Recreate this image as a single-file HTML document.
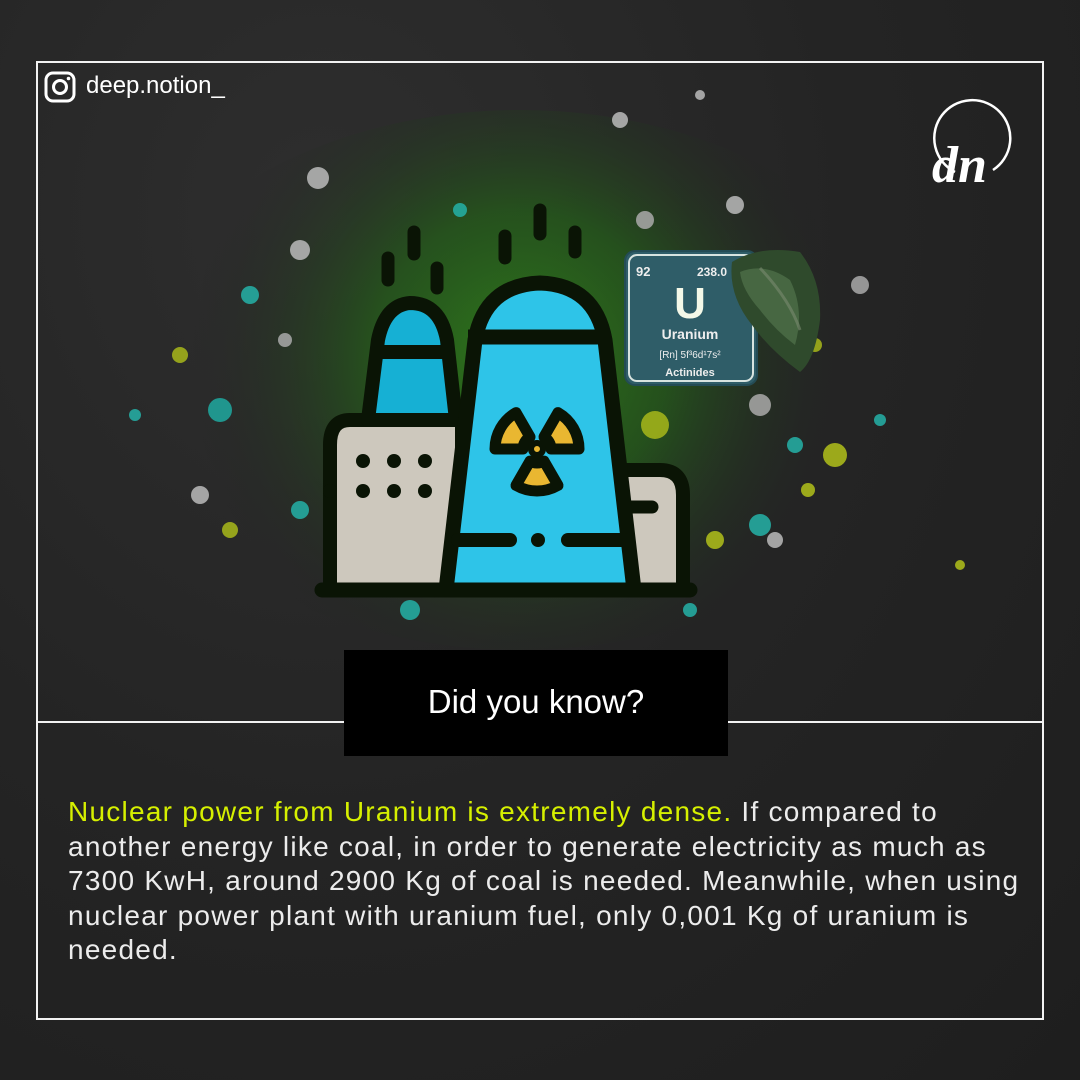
<!DOCTYPE html>
<html><head><meta charset="utf-8"><style>
html,body{margin:0;padding:0}
body{width:1080px;height:1080px;position:relative;overflow:hidden;font-family:"Liberation Sans",sans-serif;
background:radial-gradient(ellipse at 30% 20%,#2e2e2e 0%,#242424 50%,#1e1e1e 100%);}
.frame{position:absolute;left:36px;top:61px;width:1004px;height:955px;border:2px solid #f2f2f2;}
.hline{position:absolute;left:36px;top:721px;width:1008px;height:2px;background:#f2f2f2}
.dyk{position:absolute;left:344px;top:650px;width:384px;height:106px;background:#000;color:#fff;font-size:33px;text-align:center;line-height:104px}
.ig{position:absolute;left:86px;top:72px;color:#fff;font-size:24px}
.body{position:absolute;left:68px;top:795px;width:1000px;color:#ececec;font-size:28px;line-height:34.5px;letter-spacing:1.25px;white-space:nowrap}
.body span{color:#d6f000}
</style></head><body>
<svg width="1080" height="1080" style="position:absolute;left:0;top:0">
<defs>
<radialGradient id="g" cx="520" cy="360" r="330" gradientUnits="userSpaceOnUse">
<stop offset="0" stop-color="#2f7a1c" stop-opacity="1"/>
<stop offset="0.45" stop-color="#245a1a" stop-opacity=".8"/>
<stop offset="1" stop-color="#222" stop-opacity="0"/>
</radialGradient>
</defs>
<ellipse cx="520" cy="380" rx="400" ry="270" fill="url(#g)"/>
<g opacity=".85">
<circle cx="220" cy="410" r="12" fill="#1fa9a0"/><circle cx="180" cy="355" r="8" fill="#a8b81a"/><circle cx="250" cy="295" r="9" fill="#25b2a8"/>
<circle cx="300" cy="250" r="10" fill="#bbb"/><circle cx="318" cy="178" r="11" fill="#bbb"/><circle cx="645" cy="220" r="9" fill="#aaa"/>
<circle cx="735" cy="205" r="9" fill="#bbb"/><circle cx="620" cy="120" r="8" fill="#bbb"/><circle cx="835" cy="455" r="12" fill="#b2c11a"/>
<circle cx="795" cy="445" r="8" fill="#25b2a8"/><circle cx="760" cy="525" r="11" fill="#25b2a8"/><circle cx="715" cy="540" r="9" fill="#b2c11a"/>
<circle cx="655" cy="425" r="14" fill="#a8b81a"/><circle cx="775" cy="540" r="8" fill="#bbb"/><circle cx="200" cy="495" r="9" fill="#bbb"/>
<circle cx="230" cy="530" r="8" fill="#a8b81a"/><circle cx="300" cy="510" r="9" fill="#25b2a8"/><circle cx="860" cy="285" r="9" fill="#aaa"/>
<circle cx="760" cy="405" r="11" fill="#aaa"/><circle cx="815" cy="345" r="7" fill="#a8b81a"/><circle cx="880" cy="420" r="6" fill="#25b2a8"/>
<circle cx="135" cy="415" r="6" fill="#25b2a8"/><circle cx="410" cy="610" r="10" fill="#25b2a8"/><circle cx="460" cy="210" r="7" fill="#25b2a8"/>
<circle cx="700" cy="290" r="6" fill="#b2c11a"/><circle cx="285" cy="340" r="7" fill="#aaa"/><circle cx="960" cy="565" r="5" fill="#b2c11a"/>
<circle cx="808" cy="490" r="7" fill="#b2c11a"/><circle cx="700" cy="95" r="5" fill="#bbb"/><circle cx="690" cy="610" r="7" fill="#25b2a8"/>
</g>
<g stroke="#0a1405" stroke-width="13" stroke-linecap="round">
<line x1="388" y1="258" x2="388" y2="280"/><line x1="414" y1="232" x2="414" y2="254"/><line x1="437" y1="268" x2="437" y2="288"/>
<line x1="505" y1="236" x2="505" y2="258"/><line x1="540" y1="210" x2="540" y2="234"/><line x1="575" y1="232" x2="575" y2="252"/>
</g>
<path d="M350 420 H462 V590 H330 V445 Q330 420 350 420Z" fill="#cdc8bd" stroke="#0a1405" stroke-width="14" stroke-linejoin="round"/>
<path d="M368 420 L378 340 Q385 305 410 303 Q440 303 447 340 L456 420Z" fill="#16b0d4" stroke="#0a1405" stroke-width="14" stroke-linejoin="round"/>
<line x1="372" y1="352" x2="452" y2="352" stroke="#0a1405" stroke-width="14"/>
<path d="M620 470 H660 Q683 470 683 495 V590 H620Z" fill="#cdc8bd" stroke="#0a1405" stroke-width="14" stroke-linejoin="round"/>
<line x1="628" y1="507" x2="652" y2="507" stroke="#0a1405" stroke-width="13" stroke-linecap="round"/>
<path d="M446 590 L475 340 Q485 285 540 283 Q595 285 605 340 L634 590Z" fill="#2ec4e8" stroke="#0a1405" stroke-width="15" stroke-linejoin="round"/>
<line x1="468" y1="337" x2="610" y2="337" stroke="#0a1405" stroke-width="15"/>
<g stroke="#0a1405" stroke-width="14" stroke-linecap="round">
<line x1="458" y1="540" x2="510" y2="540"/><line x1="568" y1="540" x2="625" y2="540"/>
</g>
<circle cx="538" cy="540" r="7" fill="#0a1405"/>
<line x1="322" y1="590" x2="690" y2="590" stroke="#0a1405" stroke-width="15" stroke-linecap="round"/>
<g fill="#0a1405">
<circle cx="363" cy="461" r="7"/><circle cx="394" cy="461" r="7"/><circle cx="425" cy="461" r="7"/>
<circle cx="363" cy="491" r="7"/><circle cx="394" cy="491" r="7"/><circle cx="425" cy="491" r="7"/>
<circle cx="330" cy="491" r="7"/>
</g>
<g transform="translate(537,449)" fill="#e9b731" stroke="#0a1405" stroke-width="11" stroke-linejoin="round">
<path d="M-14 0 L-42 0 A42 42 0 0 1 -21 -36.4 L-7 -12.1 A14 14 0 0 0 -14 0Z"/>
<path d="M7 -12.1 L21 -36.4 A42 42 0 0 1 42 0 L14 0 A14 14 0 0 0 7 -12.1Z"/>
<path d="M7 12.1 L21 36.4 A42 42 0 0 1 -21 36.4 L-7 12.1 A14 14 0 0 0 7 12.1Z"/>
<circle r="6" stroke-width="6"/>
</g>
<rect x="625" y="251" width="132" height="134" rx="10" fill="#2f5d68" stroke="#244c55" stroke-width="2"/>
<rect x="629" y="255" width="124" height="126" rx="8" fill="none" stroke="#d8e4e0" stroke-width="2"/>
<text x="636" y="276" fill="#eee" font-size="13" font-weight="bold" font-family="Liberation Sans">92</text>
<text x="697" y="276" fill="#eee" font-size="12" font-weight="bold" font-family="Liberation Sans">238.0</text>
<text x="690" y="318" fill="#f4f8e8" font-size="44" font-weight="bold" text-anchor="middle" font-family="Liberation Sans">U</text>
<text x="690" y="339" fill="#eee" font-size="14" font-weight="bold" text-anchor="middle" font-family="Liberation Sans">Uranium</text>
<text x="690" y="358" fill="#eee" font-size="10" text-anchor="middle" font-family="Liberation Sans">[Rn] 5f³6d¹7s²</text>
<text x="690" y="376" fill="#eee" font-size="11" font-weight="bold" text-anchor="middle" font-family="Liberation Sans">Actinides</text>
<path d="M732 262 Q760 245 800 252 Q822 280 820 320 Q815 360 800 372 Q770 350 752 325 Q728 295 732 262Z" fill="#2f4a2c"/>
<path d="M740 272 Q765 262 790 280 Q805 310 795 345 Q775 330 760 310 Q742 290 740 272Z" fill="#4e6e48" opacity=".8"/>
<path d="M760 268 Q790 300 800 330" stroke="#7a8a70" stroke-width="3" fill="none" opacity=".6"/>
<rect x="46" y="73" width="28" height="28" rx="7" fill="none" stroke="#fff" stroke-width="3"/>
<circle cx="60" cy="87" r="6.5" fill="none" stroke="#fff" stroke-width="3"/>
<circle cx="68.5" cy="78.5" r="1.8" fill="#fff"/>
<path d="M955 172 A38 38 0 1 1 993 170" fill="none" stroke="#fff" stroke-width="2.5"/>
<text x="932" y="182" fill="#fff" font-size="52" font-family="Liberation Serif" font-style="italic" font-weight="bold">dn</text>
</svg>
<div class="frame"></div>
<div class="hline"></div>
<div class="ig">deep.notion_</div>
<div class="dyk">Did you know?</div>
<div class="body"><span>Nuclear power from Uranium is extremely dense.</span> If compared to<br>another energy like coal, in order to generate electricity as much as<br>7300 KwH, around 2900 Kg of coal is needed. Meanwhile, when using<br>nuclear power plant with uranium fuel, only 0,001 Kg of uranium is<br>needed.</div>
</body></html>
